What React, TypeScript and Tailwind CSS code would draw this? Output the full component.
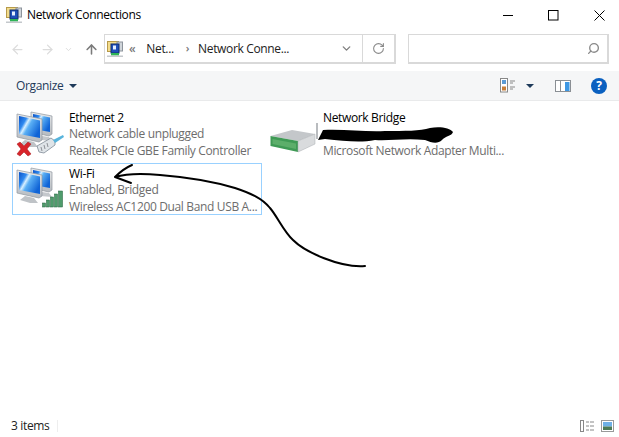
import { ArrowLeft, ArrowRight, ArrowUp, ChevronDown, RotateCw, Search } from "lucide-react";

const NetIcon = ({ size = 16 }: { size?: number }) => (
    <svg width={size} height={size} viewBox="0 0 16 16">
        <rect x="0.5" y="0.5" width="11" height="10" fill="#f3dc8c" stroke="#b79a4a" />
        <rect x="10" y="1" width="5.5" height="9" fill="#d0d5da" stroke="#8d949c" />
        <rect x="4" y="3" width="8" height="9" fill="#1f4fb8" stroke="#0f2c70" />
        <rect x="6" y="4.5" width="3" height="4" fill="#e6f0ff" />
        <rect x="4" y="12" width="8" height="2.5" fill="#2fb457" />
        <rect x="0" y="14.5" width="16" height="1.5" fill="#c4c8cc" />
    </svg>
);

const Monitors = ({ id }: { id: string }) => (
    <g>
        <defs>
            <linearGradient id={`${id}-screen`} x1="0" y1="0" x2="1" y2="0.6">
                <stop offset="0" stopColor="#0a52c8" />
                <stop offset="0.3" stopColor="#2f8af0" />
                <stop offset="0.42" stopColor="#d8f0ff" />
                <stop offset="0.55" stopColor="#5bb0f5" />
                <stop offset="1" stopColor="#0f63d6" />
            </linearGradient>
            <linearGradient id={`${id}-case`} x1="0" y1="0" x2="0" y2="1">
                <stop offset="0" stopColor="#e8eaec" />
                <stop offset="1" stopColor="#b5babf" />
            </linearGradient>
        </defs>
        <path d="M15 3 L36 7 L36 25 L33 27 L15 23 Z" fill={`url(#${id}-case)`} stroke="#8f979f" strokeWidth="0.7" />
        <path d="M17 5 L34 8.5 L34 23 L17 20 Z" fill={`url(#${id}-screen)`} />
        <path d="M26 27 L33 28 L36 32 L24 31 Z" fill="#c4c8cc" />
        <path d="M1 5 L26 10 L26 31 L23 33 L1 28 Z" fill={`url(#${id}-case)`} stroke="#8f979f" strokeWidth="0.7" />
        <path d="M3 7 L24 11.5 L24 29 L3 25 Z" fill={`url(#${id}-screen)`} />
        <path d="M9 31 L18 33 L22 38 L14 38 L4 35 Z" fill="#bfc3c7" />
    </g>
);

const EthernetIcon = () => (
    <svg width="48" height="48" viewBox="0 0 48 48" className="shrink-0">
        <Monitors id="eth" />
        <path d="M1 35 L4 33 L8 37 L12 33 L15 35 L11 40 L15 45 L12 47 L8 43 L4 47 L1 45 L5 40 Z" fill="#d8242a" stroke="#a51419" strokeWidth="0.5" />
        <path d="M21 37 L35 29 L39 32 L39 36 L28 44 L23 43 Z" fill="#dfe4e8" stroke="#7f8a95" strokeWidth="0.8" />
        <path d="M25 38 L26 42 M28 36 L29 40 M31 34 L32 38" stroke="#8d9096" strokeWidth="1" />
        <path d="M37 31 L47 26 L48 28 L39 34 Z" fill="#58b4dc" />
    </svg>
);

const WifiIcon = () => (
    <svg width="48" height="48" viewBox="0 0 48 48" className="shrink-0">
        <Monitors id="wifi" />
        <rect x="26.5" y="38" width="3" height="4" fill="#4f9c6c" stroke="#1f5f38" strokeWidth="0.5" />
        <rect x="30.5" y="35" width="3" height="7" fill="#4f9c6c" stroke="#1f5f38" strokeWidth="0.5" />
        <rect x="34.5" y="32" width="3" height="10" fill="#4f9c6c" stroke="#1f5f38" strokeWidth="0.5" />
        <rect x="38.5" y="29" width="3" height="13" fill="#4f9c6c" stroke="#1f5f38" strokeWidth="0.5" />
        <rect x="42.5" y="26" width="4" height="16" fill="#4f9c6c" stroke="#1f5f38" strokeWidth="0.5" />
    </svg>
);

const BridgeIcon = () => (
    <svg width="50" height="48" viewBox="0 0 50 48" className="shrink-0">
        <path d="M47 14 L47 30" stroke="#8a8f94" strokeWidth="1.2" />
        <path d="M0.5 27 L22 21 L45 25 L28 32 Z" fill="#c4c7ca" />
        <path d="M0.5 27 L28 32 L28 43 L0.5 37 Z" fill="#3f9a55" />
        <path d="M2.5 30 L26 34.5 L26 40 L2.5 35 Z" fill="#5cae6a" />
        <path d="M28 32 L45 25 L45 35 L28 43 Z" fill="#d9dbdd" stroke="#a8acb0" strokeWidth="0.5" />
    </svg>
);

const Item = ({ icon, name, status, device, selected }: { icon: React.ReactNode; name: string; status: string; device: string; selected?: boolean }) => (
    <div className={`w-[250px] h-[52px] flex items-center pl-[3px] border ${selected ? "border-[#99d1ff]" : "border-transparent"}`}>
        <div className="w-[53px] shrink-0">{icon}</div>
        <div className="mt-[3px] leading-[16.5px] text-[12px] whitespace-nowrap">
            <div className="text-black">{name}</div>
            <div className="text-[#6d6d6d]">{status || "\u00a0"}</div>
            <div className="text-[#6d6d6d]">{device}</div>
        </div>
    </div>
);

export default function App() {
    return (
        <div className="relative w-[619px] h-[437px] bg-white overflow-hidden flex flex-col font-['Open_Sans','Noto_Sans',sans-serif] tracking-[-0.35px] text-[12px]">
            {/* Title bar */}
            <header className="h-[30px] flex items-center pl-[6px] shrink-0">
                <NetIcon />
                <span className="ml-[5px] text-black">Network Connections</span>
                <div className="ml-auto flex items-center text-black">
                    <svg width="11" height="11" viewBox="0 0 11 11" className="mr-[34px]"><path d="M0 5.5H10" stroke="#000" /></svg>
                    <svg width="11" height="11" viewBox="0 0 11 11" className="mr-[35px]"><rect x="0.5" y="0.5" width="9.5" height="9.5" fill="none" stroke="#000" /></svg>
                    <svg width="11" height="11" viewBox="0 0 11 11" className="mr-[14px]"><path d="M0.5 0.5L10.5 10.5M10.5 0.5L0.5 10.5" stroke="#000" /></svg>
                </div>
            </header>

            {/* Nav bar */}
            <div className="h-[30px] mt-[4px] flex items-center shrink-0">
                <ArrowLeft size={15} strokeWidth={2} className="ml-[10px] text-[#dcdcdc]" />
                <ArrowRight size={15} strokeWidth={2} className="ml-[15px] text-[#dcdcdc]" />
                <ChevronDown size={9} strokeWidth={2.5} className="ml-[9px] text-[#dcdcdc]" />
                <ArrowUp size={15} strokeWidth={2.5} className="ml-[11px] text-[#7b7b7b]" />
                <div className="ml-[5px] h-[30px] w-[292px] border-2 border-[#d9d9d9] border-t-[1px] border-l-[1px] flex items-center">
                    <div className="ml-[2px]"><NetIcon /></div>
                    <span className="ml-[6px] text-[#7a7a7a] text-[12px] font-semibold">«</span>
                    <span className="ml-[11px] text-[#222]">Net...</span>
                    <span className="ml-[12px] text-[#777] text-[11px] font-semibold">›</span>
                    <span className="ml-[9px] text-[#222]">Network Conne...</span>
                    <ChevronDown size={13} strokeWidth={2.5} className="ml-auto mr-[9px] text-[#7f7f7f]" />
                    <div className="w-[32px] h-full border-l border-[#d9d9d9] flex items-center justify-center">
                        <RotateCw size={13} strokeWidth={2} className="text-[#8a8a8a]" />
                    </div>
                </div>
                <div className="ml-[12px] w-[201px] h-[30px] border border-[#d9d9d9] border-r-2 border-b-2 flex items-center justify-end pr-[7px]">
                    <Search size={13} strokeWidth={2.5} className="text-[#8a8a8a] -scale-x-100" />
                </div>
            </div>

            {/* Toolbar */}
            <div className="h-[30px] mt-[7px] bg-[#f5f6f7] border-b border-[#e9eaeb] flex items-center shrink-0">
                <span className="ml-[16px] text-[#1e3a5a]">Organize</span>
                <span className="ml-[6px] w-0 h-0 border-x-[4px] border-x-transparent border-t-[4px] border-t-[#1e3a5a]" />
                <div className="ml-auto flex items-center">
                    <svg width="16" height="15" viewBox="0 0 16 15">
                        <rect x="0.5" y="0.5" width="7" height="13.5" fill="#fff" stroke="#888" />
                        <rect x="2" y="2" width="4" height="4" fill="#5b9bd5" />
                        <rect x="2" y="8.5" width="4" height="4" fill="#c77f3a" />
                        <path d="M10 3H15M10 5H13M10 9H15M10 11H13" stroke="#888" />
                    </svg>
                    <span className="ml-[10px] w-0 h-0 border-x-[4px] border-x-transparent border-t-[4px] border-t-[#1e3a5a]" />
                    <svg width="16" height="12" viewBox="0 0 16 12" className="ml-[21px]">
                        <rect x="0.5" y="0.5" width="15" height="11" fill="#fff" stroke="#8a8f94" />
                        <rect x="10" y="2" width="4.5" height="9" fill="#3d97e3" />
                        <path d="M5.5 1V11" stroke="#8a8f94" />
                    </svg>
                    <div className="ml-[20px] mr-[12px] w-[16px] h-[16px] rounded-full bg-[#0a60c0] text-white font-bold text-[12px] leading-[16px] text-center">?</div>
                </div>
            </div>

            {/* Items */}
            <main className="flex-1 pt-[6px] pl-[12px]">
                <div className="grid grid-cols-[254px_254px] gap-y-[4px]">
                    <Item icon={<EthernetIcon />} name="Ethernet 2" status="Network cable unplugged" device="Realtek PCIe GBE Family Controller" />
                    <Item icon={<BridgeIcon />} name="Network Bridge" status="" device="Microsoft Network Adapter Multi..." />
                    <Item selected icon={<WifiIcon />} name="Wi-Fi" status="Enabled, Bridged" device="Wireless AC1200 Dual Band USB A..." />
                </div>
            </main>

            {/* Status bar */}
            <footer className="h-[24px] pt-[2px] flex items-center pl-[11px] shrink-0 text-[#222]">
                <span>3 items</span>
                <span className="ml-[8px] h-[12px] border-l border-[#eeeeee]" />
                <div className="ml-auto flex items-center pr-[5px]">
                    <svg width="14" height="12" viewBox="0 0 14 12">
                        <rect x="0.5" y="0.5" width="3" height="11" fill="#fff" stroke="#888" />
                        <path d="M6 2H9M10 2H14M6 6H9M10 6H14M6 10H9M10 10H14" stroke="#888" />
                    </svg>
                    <svg width="13" height="12" viewBox="0 0 13 12" className="ml-[7px]">
                        <rect x="0.5" y="0.5" width="12" height="11" fill="#fff" stroke="#999" />
                        <rect x="2" y="2" width="9" height="4.5" fill="#6fb0e6" />
                        <rect x="2" y="6.5" width="9" height="3.5" fill="#4d7a55" />
                    </svg>
                </div>
            </footer>

            {/* Hand drawn marks over the window */}
            <svg width="619" height="437" viewBox="0 0 619 437" className="absolute inset-0 pointer-events-none">
                <path d="M132 165 C125 168 120 172 115 177 C125 174 140 173 160 175 C185 177 215 182 235 188 C250 193 262 198 270 208 C277 216 284 232 293 240 C305 252 340 268 365 266" fill="none" stroke="#000" strokeWidth="2" strokeLinecap="round" />
                <path d="M115 177 L131 183" fill="none" stroke="#000" strokeWidth="2" strokeLinecap="round" />
                <path d="M318 140 L323 130 C345 129 365 132 385 131 C405 131 420 131 430 128 C440 126 450 128 453 132 C452 136 445 136 442 140 C438 144 432 143 425 140 C405 138 390 141 375 140 C360 143 345 141 325 139 Z" fill="#000" />
            </svg>
        </div>
    );
}
